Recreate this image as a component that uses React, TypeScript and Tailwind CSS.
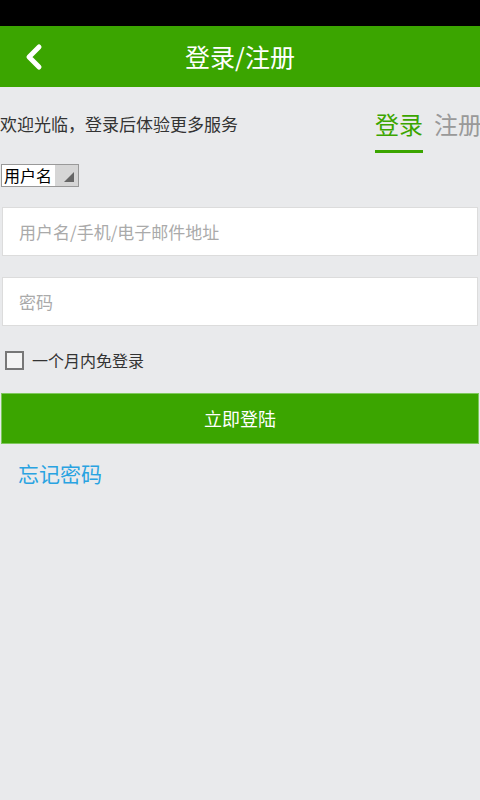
import React from 'react';

const App: React.FC = () => {
    return (
        <div
            className="w-[480px] h-[800px] bg-[#e9eaec] flex flex-col overflow-hidden"
            style={{ fontFamily: '"Noto Sans CJK SC", "Noto Sans", sans-serif' }}
        >
            {/* Status bar */}
            <div className="h-[26px] bg-black shrink-0" />

            {/* Header */}
            <div className="h-[61px] bg-[#3ba500] flex items-center relative shrink-0">
                <svg className="ml-[24px]" width="20" height="28" viewBox="0 0 20 28">
                    <path d="M15 4 L5 14 L15 24" fill="none" stroke="#fff" strokeWidth="5" strokeLinecap="round" strokeLinejoin="round" />
                </svg>
                <div className="absolute inset-0 flex items-center justify-center text-white text-[25px] leading-none">
                    登录/注册
                </div>
            </div>

            {/* Welcome and tabs */}
            <div className="flex justify-between items-start pt-[25px]">
                <div className="text-[17px] leading-[24px] text-[#333] whitespace-nowrap">
                    欢迎光临，登录后体验更多服务
                </div>
                <div className="w-[105px] shrink-0 overflow-hidden flex items-start whitespace-nowrap">
                    <div className="flex flex-col shrink-0">
                        <span className="text-[24px] leading-[24px] text-[#3ba500]">登录</span>
                        <div className="h-[3px] bg-[#3ba500] mt-[14px]" />
                    </div>
                    <span className="text-[24px] leading-[24px] text-[#999] ml-[11px] shrink-0">注册</span>
                </div>
            </div>

            {/* Account type select */}
            <div className="mt-[11px] ml-[1px] w-[78px] h-[23px] border border-[#999] bg-white flex">
                <span className="text-[16px] leading-[21px] text-black pl-[2px]">用户名</span>
                <div className="flex-1 bg-[#d6d6d6] ml-[3px] relative">
                    <div className="absolute right-[4px] bottom-[4px] w-0 h-0 border-l-[10px] border-l-transparent border-b-[10px] border-b-[#666]" />
                </div>
            </div>

            {/* Inputs */}
            <div className="mt-[20px] mx-[2px] h-[49px] bg-white border border-[#dcdcdc] flex items-center pl-[16px]">
                <span className="text-[17px] text-[#aaa]">用户名/手机/电子邮件地址</span>
            </div>
            <div className="mt-[21px] mx-[2px] h-[49px] bg-white border border-[#dcdcdc] flex items-center pl-[16px]">
                <span className="text-[17px] text-[#aaa]">密码</span>
            </div>

            {/* Remember */}
            <div className="mt-[24px] ml-[5px] flex items-center">
                <div className="w-[19px] h-[19px] border-2 border-[#777] bg-[#f4f4f4]" />
                <span className="ml-[8px] text-[16px] leading-[20px] text-[#333]">一个月内免登录</span>
            </div>

            {/* Login button */}
            <div className="mt-[23px] mx-[1px] h-[51px] bg-[#3ba500] border border-[#7fc85d] flex items-center justify-center text-white text-[18px]">
                立即登陆
            </div>

            {/* Forgot password */}
            <div className="mt-[17px] ml-[18px] text-[21px] leading-[24px] text-[#29a3e1]">忘记密码</div>
        </div>
    );
};

export default App;
